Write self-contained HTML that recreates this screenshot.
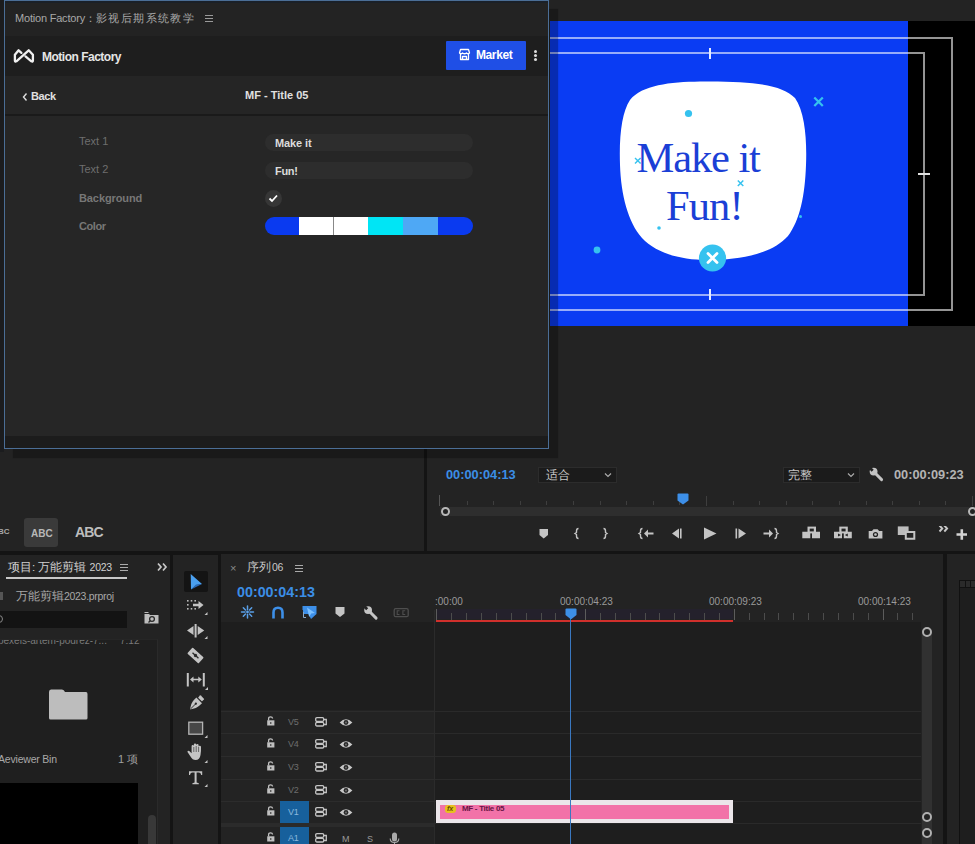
<!DOCTYPE html>
<html><head><meta charset="utf-8">
<style>
*{margin:0;padding:0;box-sizing:border-box}
html,body{width:975px;height:844px;overflow:hidden;background:#141414;font-family:"Liberation Sans",sans-serif;color:#9a9a9a}
.a{position:absolute}
.t{position:absolute;white-space:nowrap;line-height:1}
</style></head><body>

<!-- ===== upper-left panel (under floating) ===== -->
<div class="a" style="left:0;top:0;width:424px;height:551px;background:#232323"></div>
<!-- ===== program monitor panel ===== -->
<div class="a" style="left:427px;top:0;width:548px;height:551px;background:#232323"></div>
<!-- preview -->
<div class="a" style="left:550px;top:21px;width:358px;height:305px;background:#0a3cf3"></div>
<div class="a" style="left:908px;top:21px;width:67px;height:305px;background:#000"></div>


<!-- preview guides -->
<div class="a" style="left:550px;top:37px;width:403px;height:274px;border:2px solid rgba(255,255,255,.58);border-left:none"></div>
<div class="a" style="left:550px;top:52px;width:375px;height:244px;border:2px solid rgba(255,255,255,.58);border-left:none"></div>
<div class="a" style="left:708.5px;top:47.5px;width:2px;height:11.5px;background:#e6ecff"></div>
<div class="a" style="left:708.5px;top:288.5px;width:2px;height:11.5px;background:#e6ecff"></div>
<div class="a" style="left:918px;top:173.3px;width:11.5px;height:2px;background:#e0e0e0"></div>
<!-- blob -->
<svg class="a" style="left:590px;top:70px" width="240" height="210" viewBox="-10 0 240 210">
 <path d="M100 11.5 C150 11 182 14 195 28 C205 42 207 70 206 95 C205 125 200 150 188 166 C172 184 140 190 108 190 C78 190 55 182 42 168 C28 152 21 125 20 95 C19 65 22 42 30 30 C42 15 70 12 100 11.5 Z" fill="#fff"/>
 <circle cx="88.5" cy="43.5" r="3.6" fill="#35c2ef"/>
 <circle cx="59" cy="158" r="1.8" fill="#35c2ef"/>
 <circle cx="-3" cy="180" r="3.4" fill="#35c2ef"/>
 <circle cx="200.5" cy="146.5" r="1.5" fill="#35c2ef"/>
 <path d="M214.3 27.5 L222.8 36 M222.8 27.5 L214.3 36" stroke="#35c2ef" stroke-width="2.3"/>
 <path d="M137.8 110.5 L143.3 116 M143.3 110.5 L137.8 116" stroke="#35c2ef" stroke-width="1.5"/>
 <path d="M35 88 L40.6 93.6 M40.6 88 L35 93.6" stroke="#35c2ef" stroke-width="1.4"/>
 <circle cx="112.5" cy="188" r="13.6" fill="#35c2ef"/>
 <path d="M108 183.5 L117 192.5 M117 183.5 L108 192.5" stroke="#fff" stroke-width="2.8" stroke-linecap="round"/>
</svg>
<div class="t" style="left:636.5px;top:136.5px;font-family:'Liberation Serif',serif;font-size:42.5px;letter-spacing:-1.1px;color:#1b3fd6;line-height:1">Make it</div>
<div class="t" style="left:666px;top:185px;font-family:'Liberation Serif',serif;font-size:42.5px;letter-spacing:-0.9px;color:#1b3fd6;line-height:1">Fun!</div>
<!-- ===== bottom panels ===== -->
<div class="a" style="left:0;top:555px;width:170px;height:289px;background:#232323"></div>
<div class="a" style="left:173px;top:555px;width:45px;height:289px;background:#232323"></div>
<div class="a" style="left:221px;top:554px;width:722px;height:290px;background:#232323"></div>
<div class="a" style="left:947px;top:554px;width:28px;height:290px;background:#232323"></div>


<!-- ===== monitor controls ===== -->
<div class="t" style="left:446px;top:469px;font-size:12.8px;font-weight:bold;color:#3b8ee6">00:00:04:13</div>
<div class="a" style="left:538px;top:467px;width:79px;height:16px;background:#1b1b1b;border:1px solid #2c2c2c"></div>
<div class="t" style="left:546px;top:469px;font-size:12px;color:#c8c8c8">适合</div>
<svg class="a" style="left:604px;top:472px" width="8" height="6" viewBox="0 0 8 6"><path d="M1 1.5 L4 4.5 L7 1.5" fill="none" stroke="#aaa" stroke-width="1.2"/></svg>
<div class="a" style="left:783px;top:467px;width:77px;height:16px;background:#1b1b1b;border:1px solid #2c2c2c"></div>
<div class="t" style="left:788px;top:469px;font-size:12px;color:#c8c8c8">完整</div>
<svg class="a" style="left:847px;top:472px" width="8" height="6" viewBox="0 0 8 6"><path d="M1 1.5 L4 4.5 L7 1.5" fill="none" stroke="#aaa" stroke-width="1.2"/></svg>
<svg class="a" style="left:869px;top:467px" width="15" height="15" viewBox="0 0 15 15"><circle cx="4.6" cy="4.6" r="3.9" fill="#c4c4c4"/><rect x="-1.4" y="-6.5" width="2.8" height="5.2" fill="#232323" transform="translate(4.6 4.6) rotate(-45)"/><path d="M5 5 L12.6 12.6" stroke="#c4c4c4" stroke-width="2.9" stroke-linecap="round"/></svg>
<div class="t" style="left:894px;top:469px;font-size:12.8px;font-weight:bold;color:#b4b4b4">00:00:09:23</div>
<!-- scrub ruler -->
<div class="a" style="left:439px;top:495px;width:1px;height:11px;background:#555"></div>
<div class="a" style="left:467px;top:501px;width:1px;height:4px;background:#3e3e3e"></div><div class="a" style="left:493px;top:501px;width:1px;height:4px;background:#3e3e3e"></div><div class="a" style="left:520px;top:501px;width:1px;height:4px;background:#3e3e3e"></div><div class="a" style="left:546px;top:501px;width:1px;height:4px;background:#3e3e3e"></div><div class="a" style="left:573px;top:501px;width:1px;height:4px;background:#3e3e3e"></div><div class="a" style="left:600px;top:501px;width:1px;height:4px;background:#3e3e3e"></div><div class="a" style="left:626px;top:501px;width:1px;height:4px;background:#3e3e3e"></div><div class="a" style="left:653px;top:501px;width:1px;height:4px;background:#3e3e3e"></div><div class="a" style="left:679px;top:501px;width:1px;height:4px;background:#3e3e3e"></div><div class="a" style="left:706px;top:496px;width:1px;height:10px;background:#3e3e3e"></div><div class="a" style="left:733px;top:501px;width:1px;height:4px;background:#3e3e3e"></div><div class="a" style="left:759px;top:501px;width:1px;height:4px;background:#3e3e3e"></div><div class="a" style="left:786px;top:501px;width:1px;height:4px;background:#3e3e3e"></div><div class="a" style="left:812px;top:501px;width:1px;height:4px;background:#3e3e3e"></div><div class="a" style="left:839px;top:501px;width:1px;height:4px;background:#3e3e3e"></div><div class="a" style="left:866px;top:501px;width:1px;height:4px;background:#3e3e3e"></div><div class="a" style="left:892px;top:501px;width:1px;height:4px;background:#3e3e3e"></div><div class="a" style="left:919px;top:501px;width:1px;height:4px;background:#3e3e3e"></div><div class="a" style="left:945px;top:501px;width:1px;height:4px;background:#3e3e3e"></div><div class="a" style="left:972px;top:496px;width:1px;height:10px;background:#3e3e3e"></div>
<div class="a" style="left:440px;top:507px;width:535px;height:9px;background:#2e2e2e"></div>
<div class="a" style="left:441px;top:507px;width:9px;height:9px;border:2px solid #b8b8b8;border-radius:50%;background:#232323"></div>
<div class="a" style="left:968px;top:507px;width:9px;height:9px;border:2px solid #b8b8b8;border-radius:50%;background:#232323"></div>
<svg class="a" style="left:677px;top:493px" width="12" height="12" viewBox="0 0 12 12"><path d="M0.5 1.5 Q0.5 0.5 1.5 0.5 H10.5 Q11.5 0.5 11.5 1.5 V7.5 L6 11.5 L0.5 7.5 Z" fill="#3d8fe8"/></svg>
<!-- transport -->
<svg class="a" style="left:536px;top:526px" width="440" height="16" viewBox="536 526 440 16" fill="#c4c4c4" stroke="#c4c4c4">
 <path d="M539.5 529 H548 V535 L543.7 538.5 L539.5 535 Z" stroke="none"/>
 <path d="M578.5 528.5 Q576.5 528.5 576.5 531 V532.5 L575 533.5 L576.5 534.5 V536 Q576.5 538.5 578.5 538.5" fill="none" stroke-width="1.4"/>
 <path d="M603.5 528.5 Q605.5 528.5 605.5 531 V532.5 L607 533.5 L605.5 534.5 V536 Q605.5 538.5 603.5 538.5" fill="none" stroke-width="1.4"/>
 <path d="M642.5 528.5 Q640.5 528.5 640.5 531 V532.5 L639 533.5 L640.5 534.5 V536 Q640.5 538.5 642.5 538.5" fill="none" stroke-width="1.4"/>
 <path d="M644 533.5 L648 529.5 V532.5 H653.5 V534.5 H648 V537.5 Z" stroke="none"/>
 <path d="M680 528.5 V538.5 H681.6 V528.5 Z M679 528.5 L672 533.5 L679 538.5 Z" stroke="none"/>
 <path d="M704 527.5 L716.5 533.5 L704 539.5 Z" stroke="none"/>
 <path d="M735.5 528.5 V538.5 H737.1 V528.5 Z M738.5 528.5 L746 533.5 L738.5 538.5 Z" stroke="none"/>
<g transform="translate(2.5 0)"> <path d="M772 528.5 Q774 528.5 774 531 V532.5 L775.5 533.5 L774 534.5 V536 Q774 538.5 772 538.5" fill="none" stroke-width="1.4"/>
 <path d="M770.5 533.5 L766.5 529.5 V532.5 H761 V534.5 H766.5 V537.5 Z" stroke="none"/></g>
 <path d="M802.3 531.8 H810.3 V538.2 H802.3 Z M812 531.8 H820 V538.2 H812 Z" stroke="none"/>
 <path d="M807.5 526.6 H816 V533.4 H807.5 Z"stroke="none"/>
 <path d="M809.7 528.6 H813.8 V531.4 H809.7 Z" fill="#232323" stroke="none"/>
 <path d="M834 531.8 H842 V538.2 H834 Z M843.8 531.8 H851.8 V538.2 H843.8 Z" stroke="none"/>
 <path d="M839.3 526.6 H847.8 V533.4 H839.3 Z" stroke="none"/>
 <path d="M841.5 528.6 H845.6 V531.4 H841.5 Z" fill="#232323" stroke="none"/>
 <path d="M838 533.5 L841 535 L838 536.5 Z M847.8 533.5 L844.8 535 L847.8 536.5 Z" fill="#232323" stroke="none"/>
 <path d="M868.7 531 H872 L873.5 529.2 H877.6 L879.1 531 H882.4 V538.4 H868.7 Z" stroke="none"/>
 <circle cx="875.5" cy="534.5" r="2.6" fill="#232323" stroke="none"/>
 <circle cx="875.5" cy="534.5" r="1.3" stroke="none"/>
 <path d="M897.8 526.4 H908.6 V535 H897.8 Z" stroke="none" fill="#bdbdbd"/>
 <path d="M905.8 531.9 H914.3 V538.8 H905.8 Z" fill="#232323" stroke-width="2" stroke="#c4c4c4"/>
 <path d="M939.5 525.5 L942.3 528.5 L939.5 531.5 M944.3 525.5 L947.1 528.5 L944.3 531.5" fill="none" stroke-width="1.9" stroke="#c8c8c8"/>
 <path d="M961.8 529.2 V539.8 M956.5 534.5 H967" fill="none" stroke-width="2.6" stroke="#d4d4d4"/>
</svg>
<!-- ABC panel -->
<div class="t" style="left:-2px;top:528px;font-size:8px;font-weight:bold;color:#a8a8a8">BC</div>
<div class="a" style="left:24px;top:518px;width:34px;height:29px;background:#3a3a3a;border-radius:3px"></div>
<div class="t" style="left:31px;top:529px;font-size:10px;font-weight:bold;color:#b8b8b8">ABC</div>
<div class="t" style="left:75px;top:525px;font-size:14px;font-weight:bold;letter-spacing:-0.9px;color:#bdbdbd">ABC</div>

<!-- ===== project panel ===== -->
<div class="t" style="left:8px;top:562px;font-size:11.5px;color:#d0d0d0">项目: 万能剪辑 <span style="font-size:10.5px;letter-spacing:-0.3px">2023</span></div>
<div class="a" style="left:119.5px;top:564px;width:8px;height:1px;background:#aaa;box-shadow:0 3px 0 #aaa,0 6px 0 #aaa"></div>
<div class="a" style="left:6px;top:577px;width:121px;height:2px;background:#c8c8c8"></div>
<svg class="a" style="left:157px;top:562px" width="11" height="10" viewBox="0 0 11 10"><path d="M1 1.5 L4 5 L1 8.5 M6 1.5 L9 5 L6 8.5" fill="none" stroke="#c8c8c8" stroke-width="1.7"/></svg>
<div class="a" style="left:0;top:592px;width:3px;height:8px;background:#555"></div>
<div class="t" style="left:16px;top:591px;font-size:11.5px;color:#a8a8a8">万能剪辑<span style="font-size:10.5px;letter-spacing:-0.3px">2023.prproj</span></div>
<div class="a" style="left:0;top:611px;width:127px;height:17px;background:#131313"></div>
<div class="a" style="left:-5px;top:615px;width:8px;height:8px;border:1.5px solid #888;border-radius:50%"></div>
<svg class="a" style="left:144px;top:612px" width="15" height="12" viewBox="0 0 15 12"><path d="M0.5 2 H5 L6 3 H14.5 V11.5 H0.5 Z" fill="#bdbdbd"/><path d="M0.5 0.5 H4.5" stroke="#bdbdbd"/><circle cx="8" cy="7" r="2.4" fill="none" stroke="#2a2a2a" stroke-width="1.3"/><path d="M6.3 8.7 L4.5 10.5" stroke="#2a2a2a" stroke-width="1.3"/></svg>
<div class="a" style="left:0;top:639px;width:158px;height:205px;background:#1f1f1f;border-right:1px solid #2a2a2a;border-top:1px solid #262626;overflow:hidden"><div class="t" style="left:-2px;top:-4px;font-size:10px;color:#7a7a7a">pexels-artem-podrez-7...</div><div class="t" style="left:120px;top:-4px;font-size:10px;color:#7a7a7a">7:12</div></div>
<svg class="a" style="left:48px;top:689px" width="40" height="31" viewBox="0 0 40 31"><path d="M1 3 Q1 0.5 3 0.5 H14 Q16 0.5 17 3 H38 Q39.5 3 39.5 5 V29 Q39.5 30.5 38 30.5 H2.5 Q1 30.5 1 29 Z" fill="#bdbdbd"/></svg>
<div class="t" style="left:-2px;top:754px;font-size:10.5px;letter-spacing:-0.2px;color:#a8a8a8">Aeviewer Bin</div>
<div class="t" style="left:118px;top:754px;font-size:11px;color:#a0a0a0">1 项</div>
<div class="a" style="left:0;top:783px;width:138px;height:61px;background:#000"></div>
<div class="a" style="left:148px;top:815px;width:8px;height:40px;background:#383838;border-radius:4px"></div>

<!-- ===== tools ===== -->
<div class="a" style="left:184px;top:571px;width:24px;height:21px;background:#141414;border-radius:2px"></div>
<svg class="a" style="left:173px;top:560px" width="45" height="230" viewBox="173 560 45 230" fill="#c4c4c4">
 <path d="M190.7 574 L202 584 L196.5 585 L191 589.5 Z" fill="#4aa0f0"/>
 <path d="M196 584.5 L202 584 L191 589.5 Z" fill="#2a6ab8"/>
 <g fill="#bbb"><rect x="187" y="600" width="1.6" height="1.6"/><rect x="190.7" y="600" width="1.6" height="1.6"/><rect x="194.4" y="600" width="1.6" height="1.6"/><rect x="187" y="604" width="1.6" height="1.6"/><rect x="187" y="608" width="1.6" height="1.6"/><rect x="190.7" y="608" width="1.6" height="1.6"/><rect x="194.4" y="608" width="1.6" height="1.6"/></g>
 <path d="M193 603.8 H198.5 V601 L203.5 605 L198.5 609 V606.2 H193 Z"/>
 <path d="M204.5 615 L207.5 615 L207.5 612 Z"/>
 <path d="M194.6 624 H196.6 V637.5 H194.6 Z"/>
 <path d="M187 630.5 L193.5 626 V635 Z M204.2 630.5 L197.7 626 V635 Z"/>
 <path d="M204.5 639 L207.5 639 L207.5 636 Z"/>
 <g transform="translate(195.5 655.5) rotate(42)"><rect x="-7.5" y="-4" width="15" height="8" rx="0.8"/><path d="M-4 -0.7 H-1.5 L-0.7 -1.6 L0.7 -1.6 L1.5 -0.7 H4 V0.7 H1.5 L0.7 1.6 L-0.7 1.6 L-1.5 0.7 H-4 Z" fill="#2a2a2a"/></g>
 <path d="M186.8 673 H188.8 V686.5 H186.8 Z M202.8 673 H204.8 V686.5 H202.8 Z"/>
 <path d="M190 679.5 L193.5 676.5 V678.7 H198.3 V676.5 L201.8 679.5 L198.3 682.5 V680.3 H193.5 V682.5 Z"/>
 <path d="M205 690 L208 690 L208 687 Z"/>
 <g transform="translate(196 703.5) rotate(45)"><rect x="-2.8" y="-9" width="5.6" height="3.4" rx="0.6"/><path d="M-4 -4.5 H4 V-1 Q4 3 0 8.5 Q-4 3 -4 -1 Z"/><path d="M0 0 V8" stroke="#2a2a2a" stroke-width="0.9"/><circle cx="0" cy="0.2" r="1.1" fill="#2a2a2a"/></g>
 <rect x="188.8" y="722.2" width="13.8" height="12" fill="#474747" stroke="#b4b4b4" stroke-width="1.3"/>
 <path d="M204.5 738 L207.5 738 L207.5 735 Z"/>
 <path d="M190.5 756.5 L187.5 752 Q187.3 750.8 188.5 750.8 Q189.5 750.8 190.8 752.5 L191.6 753.2 V746.3 Q191.6 745 192.7 745 Q193.8 745 193.8 746.3 V744.8 Q193.8 743.5 195 743.5 Q196.2 743.5 196.2 744.8 V745.3 Q196.2 744 197.4 744 Q198.6 744 198.6 745.3 V747 Q198.6 745.8 199.8 745.8 Q201 745.8 201 747 Q201.2 751 200.5 755 Q199.8 760 195.5 760 Q192.5 760 190.5 756.5 Z"/>
 <path d="M193.8 747 V752 M196.2 746 V752 M198.6 747 V752" stroke="#232323" stroke-width="0.6" fill="none"/>
 <path d="M204.5 763 L207.5 763 L207.5 760 Z"/>
 <path d="M189 771.2 H202.2 V775 H201.2 Q200.8 772.6 198.8 772.6 H196.6 V782.6 L198.8 783.2 V784.2 H192.4 V783.2 L194.6 782.6 V772.6 H192.4 Q190.4 772.6 190 775 H189 Z"/>
 <path d="M204.5 787 L207.5 787 L207.5 784 Z"/>
</svg>

<!-- ===== timeline ===== -->
<div class="t" style="left:230px;top:563px;font-size:11px;color:#8a8a8a">×</div>
<div class="t" style="left:247px;top:561px;font-size:12px;color:#c8c8c8">序列<span style="font-size:10.5px;margin-left:1px;letter-spacing:-0.3px">06</span></div>
<div class="a" style="left:295px;top:565px;width:8px;height:1px;background:#aaa;box-shadow:0 3px 0 #aaa,0 6px 0 #aaa"></div>
<div class="t" style="left:237px;top:585px;font-size:14.3px;font-weight:bold;color:#3b8ee6">00:00:04:13</div>
<svg class="a" style="left:236px;top:603px" width="180" height="18" viewBox="236 603 180 18">
<g stroke="#5aa0e8" stroke-width="1.5" stroke-linecap="round" fill="none"><path d="M247.5 606 V609.5 M247.5 614.5 V618 M241.5 612 H245 M250 612 H253.5 M243.3 607.8 L245.5 610 M249.5 614 L251.7 616.2 M251.7 607.8 L249.5 610 M245.5 614 L243.3 616.2"/></g><circle cx="247.5" cy="612" r="1.4" fill="#5aa0e8"/>
 <path d="M273.5 618.5 V612.5 Q273.5 607.8 278 607.8 Q282.5 607.8 282.5 612.5 V618.5" stroke="#3d8fe8" stroke-width="2.6" fill="none"/>
<path d="M302.5 606 H316.5 V614 L311 619 L308.5 614 H302.5 Z" fill="#3d8fe8"/><path d="M307 607.5 L315 613 L311.2 613.5 L309.2 617 Z" fill="#7cc0ff"/><path d="M302.5 610 V618.5 H306.5" stroke="#232323" stroke-width="1" fill="none"/><path d="M303.5 612 V617.5 H306" stroke="#8ac" stroke-width="1" fill="none"/>
 <path d="M335.5 607 H344.5 V613.5 L340 617 L335.5 613.5 Z" fill="#c4c4c4"/>
<g transform="translate(363.5 605.5)"><circle cx="4.6" cy="4.6" r="3.9" fill="#c4c4c4"/><rect x="-1.4" y="-6.5" width="2.8" height="5.2" fill="#232323" transform="translate(4.6 4.6) rotate(-45)"/><path d="M5 5 L12.6 12.6" stroke="#c4c4c4" stroke-width="2.9" stroke-linecap="round"/></g>
 <rect x="394.2" y="608.7" width="14" height="8" rx="1.5" fill="none" stroke="#4e4e4e" stroke-width="1.3"/>
 <path d="M399.5 610.8 H397.2 V614.5 H399.5 M405.2 610.8 H402.9 V614.5 H405.2" stroke="#4e4e4e" stroke-width="1.1" fill="none"/>
</svg>
<!-- header split -->
<div class="a" style="left:221px;top:622px;width:213px;height:88px;background:#1e1e1e"></div>
<div class="a" style="left:435px;top:622px;width:486px;height:222px;background:#1e1e1e"></div>
<div class="a" style="left:434px;top:610px;width:1px;height:234px;background:#2b2b2b"></div>
<!-- track header rows -->
<div class="a" style="left:221px;top:711px;width:213px;height:22px;background:#232323;border-top:1px solid #2c2c2c"></div><div class="a" style="left:435px;top:711px;width:486px;height:1px;background:#2a2a2a"></div><div class="t" style="left:288px;top:718px;font-size:9px;letter-spacing:-0.3px;color:#6e6e6e">V5</div><svg class="a" style="left:266px;top:716px" width="10" height="10" viewBox="0 0 10 10"><path d="M2.6 4.5 V2.8 Q2.6 0.8 4.6 0.8 Q6.4 0.8 6.6 2.5" fill="none" stroke="#c0c0c0" stroke-width="1.3"/><rect x="1.2" y="4.3" width="7.2" height="5.2" fill="#c0c0c0"/><rect x="4.3" y="6" width="1" height="2" fill="#333"/></svg><svg class="a" style="left:315px;top:717px" width="12" height="10" viewBox="0 0 12 10"><rect x="0.7" y="0.7" width="8" height="3.6" rx="1.2" fill="none" stroke="#c4c4c4" stroke-width="1.3"/><rect x="0.7" y="5.4" width="8" height="3.6" rx="1.2" fill="none" stroke="#c4c4c4" stroke-width="1.3"/><path d="M8.5 2.5 H11.3 V7.5 H8.5" fill="none" stroke="#c4c4c4" stroke-width="1.3"/></svg><svg class="a" style="left:339px;top:718px" width="14" height="9" viewBox="0 0 14 9"><path d="M0.6 4.5 Q7 -2.2 13.4 4.5 Q7 11.2 0.6 4.5 Z" fill="#c8c8c8"/><circle cx="7" cy="4.5" r="2.4" fill="#2a2a2a"/><circle cx="7" cy="4.5" r="0.9" fill="#777"/></svg><div class="a" style="left:221px;top:733px;width:213px;height:22px;background:#232323;border-top:1px solid #2c2c2c"></div><div class="a" style="left:435px;top:733px;width:486px;height:1px;background:#2a2a2a"></div><div class="t" style="left:288px;top:740px;font-size:9px;letter-spacing:-0.3px;color:#6e6e6e">V4</div><svg class="a" style="left:266px;top:738px" width="10" height="10" viewBox="0 0 10 10"><path d="M2.6 4.5 V2.8 Q2.6 0.8 4.6 0.8 Q6.4 0.8 6.6 2.5" fill="none" stroke="#c0c0c0" stroke-width="1.3"/><rect x="1.2" y="4.3" width="7.2" height="5.2" fill="#c0c0c0"/><rect x="4.3" y="6" width="1" height="2" fill="#333"/></svg><svg class="a" style="left:315px;top:739px" width="12" height="10" viewBox="0 0 12 10"><rect x="0.7" y="0.7" width="8" height="3.6" rx="1.2" fill="none" stroke="#c4c4c4" stroke-width="1.3"/><rect x="0.7" y="5.4" width="8" height="3.6" rx="1.2" fill="none" stroke="#c4c4c4" stroke-width="1.3"/><path d="M8.5 2.5 H11.3 V7.5 H8.5" fill="none" stroke="#c4c4c4" stroke-width="1.3"/></svg><svg class="a" style="left:339px;top:740px" width="14" height="9" viewBox="0 0 14 9"><path d="M0.6 4.5 Q7 -2.2 13.4 4.5 Q7 11.2 0.6 4.5 Z" fill="#c8c8c8"/><circle cx="7" cy="4.5" r="2.4" fill="#2a2a2a"/><circle cx="7" cy="4.5" r="0.9" fill="#777"/></svg><div class="a" style="left:221px;top:756px;width:213px;height:22px;background:#232323;border-top:1px solid #2c2c2c"></div><div class="a" style="left:435px;top:756px;width:486px;height:1px;background:#2a2a2a"></div><div class="t" style="left:288px;top:763px;font-size:9px;letter-spacing:-0.3px;color:#6e6e6e">V3</div><svg class="a" style="left:266px;top:761px" width="10" height="10" viewBox="0 0 10 10"><path d="M2.6 4.5 V2.8 Q2.6 0.8 4.6 0.8 Q6.4 0.8 6.6 2.5" fill="none" stroke="#c0c0c0" stroke-width="1.3"/><rect x="1.2" y="4.3" width="7.2" height="5.2" fill="#c0c0c0"/><rect x="4.3" y="6" width="1" height="2" fill="#333"/></svg><svg class="a" style="left:315px;top:762px" width="12" height="10" viewBox="0 0 12 10"><rect x="0.7" y="0.7" width="8" height="3.6" rx="1.2" fill="none" stroke="#c4c4c4" stroke-width="1.3"/><rect x="0.7" y="5.4" width="8" height="3.6" rx="1.2" fill="none" stroke="#c4c4c4" stroke-width="1.3"/><path d="M8.5 2.5 H11.3 V7.5 H8.5" fill="none" stroke="#c4c4c4" stroke-width="1.3"/></svg><svg class="a" style="left:339px;top:763px" width="14" height="9" viewBox="0 0 14 9"><path d="M0.6 4.5 Q7 -2.2 13.4 4.5 Q7 11.2 0.6 4.5 Z" fill="#c8c8c8"/><circle cx="7" cy="4.5" r="2.4" fill="#2a2a2a"/><circle cx="7" cy="4.5" r="0.9" fill="#777"/></svg><div class="a" style="left:221px;top:779px;width:213px;height:22px;background:#232323;border-top:1px solid #2c2c2c"></div><div class="a" style="left:435px;top:779px;width:486px;height:1px;background:#2a2a2a"></div><div class="t" style="left:288px;top:786px;font-size:9px;letter-spacing:-0.3px;color:#6e6e6e">V2</div><svg class="a" style="left:266px;top:784px" width="10" height="10" viewBox="0 0 10 10"><path d="M2.6 4.5 V2.8 Q2.6 0.8 4.6 0.8 Q6.4 0.8 6.6 2.5" fill="none" stroke="#c0c0c0" stroke-width="1.3"/><rect x="1.2" y="4.3" width="7.2" height="5.2" fill="#c0c0c0"/><rect x="4.3" y="6" width="1" height="2" fill="#333"/></svg><svg class="a" style="left:315px;top:785px" width="12" height="10" viewBox="0 0 12 10"><rect x="0.7" y="0.7" width="8" height="3.6" rx="1.2" fill="none" stroke="#c4c4c4" stroke-width="1.3"/><rect x="0.7" y="5.4" width="8" height="3.6" rx="1.2" fill="none" stroke="#c4c4c4" stroke-width="1.3"/><path d="M8.5 2.5 H11.3 V7.5 H8.5" fill="none" stroke="#c4c4c4" stroke-width="1.3"/></svg><svg class="a" style="left:339px;top:786px" width="14" height="9" viewBox="0 0 14 9"><path d="M0.6 4.5 Q7 -2.2 13.4 4.5 Q7 11.2 0.6 4.5 Z" fill="#c8c8c8"/><circle cx="7" cy="4.5" r="2.4" fill="#2a2a2a"/><circle cx="7" cy="4.5" r="0.9" fill="#777"/></svg><div class="a" style="left:221px;top:801px;width:213px;height:22px;background:#232323;border-top:1px solid #2c2c2c"></div><div class="a" style="left:435px;top:801px;width:486px;height:1px;background:#2a2a2a"></div><div class="a" style="left:280px;top:801px;width:29px;height:22px;background:#17609c"></div><div class="t" style="left:288px;top:808px;font-size:9px;letter-spacing:-0.3px;color:#8ab8dc">V1</div><svg class="a" style="left:266px;top:806px" width="10" height="10" viewBox="0 0 10 10"><path d="M2.6 4.5 V2.8 Q2.6 0.8 4.6 0.8 Q6.4 0.8 6.6 2.5" fill="none" stroke="#c0c0c0" stroke-width="1.3"/><rect x="1.2" y="4.3" width="7.2" height="5.2" fill="#c0c0c0"/><rect x="4.3" y="6" width="1" height="2" fill="#333"/></svg><svg class="a" style="left:315px;top:807px" width="12" height="10" viewBox="0 0 12 10"><rect x="0.7" y="0.7" width="8" height="3.6" rx="1.2" fill="none" stroke="#c4c4c4" stroke-width="1.3"/><rect x="0.7" y="5.4" width="8" height="3.6" rx="1.2" fill="none" stroke="#c4c4c4" stroke-width="1.3"/><path d="M8.5 2.5 H11.3 V7.5 H8.5" fill="none" stroke="#c4c4c4" stroke-width="1.3"/></svg><svg class="a" style="left:339px;top:808px" width="14" height="9" viewBox="0 0 14 9"><path d="M0.6 4.5 Q7 -2.2 13.4 4.5 Q7 11.2 0.6 4.5 Z" fill="#c8c8c8"/><circle cx="7" cy="4.5" r="2.4" fill="#2a2a2a"/><circle cx="7" cy="4.5" r="0.9" fill="#777"/></svg><div class="a" style="left:221px;top:823px;width:213px;height:21px;background:#232323;border-top:4px solid #2b2b2b"></div><div class="a" style="left:435px;top:823px;width:486px;height:1px;background:#2a2a2a"></div><div class="a" style="left:280px;top:827px;width:29px;height:17px;background:#17609c"></div><div class="t" style="left:288px;top:834px;font-size:9px;letter-spacing:-0.3px;color:#8ab8dc">A1</div><svg class="a" style="left:266px;top:832px" width="10" height="10" viewBox="0 0 10 10"><path d="M2.6 4.5 V2.8 Q2.6 0.8 4.6 0.8 Q6.4 0.8 6.6 2.5" fill="none" stroke="#c0c0c0" stroke-width="1.3"/><rect x="1.2" y="4.3" width="7.2" height="5.2" fill="#c0c0c0"/><rect x="4.3" y="6" width="1" height="2" fill="#333"/></svg><svg class="a" style="left:315px;top:833px" width="12" height="10" viewBox="0 0 12 10"><rect x="0.7" y="0.7" width="8" height="3.6" rx="1.2" fill="none" stroke="#c4c4c4" stroke-width="1.3"/><rect x="0.7" y="5.4" width="8" height="3.6" rx="1.2" fill="none" stroke="#c4c4c4" stroke-width="1.3"/><path d="M8.5 2.5 H11.3 V7.5 H8.5" fill="none" stroke="#c4c4c4" stroke-width="1.3"/></svg><div class="t" style="left:342px;top:835px;font-size:9px;color:#9a9a9a">M</div><div class="t" style="left:367px;top:835px;font-size:9px;color:#9a9a9a">S</div><svg class="a" style="left:389px;top:832px" width="11" height="13" viewBox="0 0 11 13"><rect x="3" y="0.5" width="5" height="9" rx="2.5" fill="#aaa"/><path d="M1.2 6.5 Q1.2 10.5 5.5 10.5 Q9.8 10.5 9.8 6.5 M5.5 10.5 V13" fill="none" stroke="#aaa" stroke-width="1.1"/></svg>
<!-- ruler -->
<div class="t" style="left:435px;top:597px;font-size:10px;color:#9a9a9a">:00:00</div>
<div class="t" style="left:560px;top:597px;font-size:10px;color:#9a9a9a">00:00:04:23</div>
<div class="t" style="left:709px;top:597px;font-size:10px;color:#9a9a9a">00:00:09:23</div>
<div class="t" style="left:858px;top:597px;font-size:10px;color:#9a9a9a">00:00:14:23</div>

<div class="a" style="left:436px;top:609px;width:297px;height:10px;background:#24212c"></div><div class="a" style="left:436.4px;top:609px;width:1px;height:11px;background:#5c5c5c"></div><div class="a" style="left:451.3px;top:613px;width:1px;height:7px;background:#4c4c4c"></div><div class="a" style="left:466.1px;top:613px;width:1px;height:7px;background:#4c4c4c"></div><div class="a" style="left:481.0px;top:613px;width:1px;height:7px;background:#4c4c4c"></div><div class="a" style="left:495.9px;top:613px;width:1px;height:7px;background:#4c4c4c"></div><div class="a" style="left:510.8px;top:613px;width:1px;height:7px;background:#4c4c4c"></div><div class="a" style="left:525.6px;top:613px;width:1px;height:7px;background:#4c4c4c"></div><div class="a" style="left:540.5px;top:613px;width:1px;height:7px;background:#4c4c4c"></div><div class="a" style="left:555.4px;top:613px;width:1px;height:7px;background:#4c4c4c"></div><div class="a" style="left:570.2px;top:613px;width:1px;height:7px;background:#4c4c4c"></div><div class="a" style="left:585.1px;top:609px;width:1px;height:11px;background:#5c5c5c"></div><div class="a" style="left:600.0px;top:613px;width:1px;height:7px;background:#4c4c4c"></div><div class="a" style="left:614.8px;top:613px;width:1px;height:7px;background:#4c4c4c"></div><div class="a" style="left:629.7px;top:613px;width:1px;height:7px;background:#4c4c4c"></div><div class="a" style="left:644.6px;top:613px;width:1px;height:7px;background:#4c4c4c"></div><div class="a" style="left:659.4px;top:613px;width:1px;height:7px;background:#4c4c4c"></div><div class="a" style="left:674.3px;top:613px;width:1px;height:7px;background:#4c4c4c"></div><div class="a" style="left:689.2px;top:613px;width:1px;height:7px;background:#4c4c4c"></div><div class="a" style="left:704.1px;top:613px;width:1px;height:7px;background:#4c4c4c"></div><div class="a" style="left:718.9px;top:613px;width:1px;height:7px;background:#4c4c4c"></div><div class="a" style="left:733.8px;top:609px;width:1px;height:11px;background:#5c5c5c"></div><div class="a" style="left:748.7px;top:613px;width:1px;height:7px;background:#4c4c4c"></div><div class="a" style="left:763.5px;top:613px;width:1px;height:7px;background:#4c4c4c"></div><div class="a" style="left:778.4px;top:613px;width:1px;height:7px;background:#4c4c4c"></div><div class="a" style="left:793.3px;top:613px;width:1px;height:7px;background:#4c4c4c"></div><div class="a" style="left:808.1px;top:613px;width:1px;height:7px;background:#4c4c4c"></div><div class="a" style="left:823.0px;top:613px;width:1px;height:7px;background:#4c4c4c"></div><div class="a" style="left:837.9px;top:613px;width:1px;height:7px;background:#4c4c4c"></div><div class="a" style="left:852.8px;top:613px;width:1px;height:7px;background:#4c4c4c"></div><div class="a" style="left:867.6px;top:613px;width:1px;height:7px;background:#4c4c4c"></div><div class="a" style="left:882.5px;top:609px;width:1px;height:11px;background:#5c5c5c"></div><div class="a" style="left:897.4px;top:613px;width:1px;height:7px;background:#4c4c4c"></div><div class="a" style="left:912.2px;top:613px;width:1px;height:7px;background:#4c4c4c"></div><div class="a" style="left:436px;top:620px;width:297px;height:2px;background:#d0302c"></div>
<div class="a" style="left:570px;top:612px;width:1px;height:232px;background:#3a78c0"></div>
<svg class="a" style="left:565px;top:608px" width="12" height="12" viewBox="0 0 12 12"><path d="M0.5 1.5 Q0.5 0.5 1.5 0.5 H10.5 Q11.5 0.5 11.5 1.5 V7 L6.5 11 H5.5 L0.5 7 Z" fill="#3d8fe8"/></svg>
<!-- clip -->
<div class="a" style="left:436px;top:800px;width:297px;height:23px;background:#ebe6ea"></div>
<div class="a" style="left:440px;top:805px;width:289px;height:14px;background:#f272a8"></div>
<div class="a" style="left:445px;top:805px;width:11px;height:8px;background:#e6c21e;border-radius:3px"></div>
<div class="t" style="left:447px;top:805px;font-size:7px;font-weight:bold;font-style:italic;color:#6a4a00">fx</div>
<div class="t" style="left:462px;top:805px;font-size:8px;font-weight:bold;letter-spacing:-0.3px;color:#6a1445">MF - Title 05</div>
<div class="a" style="left:570px;top:800px;width:1px;height:23px;background:#3a78c0"></div>
<!-- scrollbar -->
<div class="a" style="left:922px;top:632px;width:10px;height:212px;background:#313131"></div>
<div class="a" style="left:922px;top:627px;width:10px;height:10px;border:2px solid #b0b0b0;border-radius:50%;background:#232323"></div>
<div class="a" style="left:922px;top:812px;width:10px;height:10px;border:2px solid #b0b0b0;border-radius:50%;background:#232323"></div>
<div class="a" style="left:922px;top:828px;width:10px;height:10px;border:2px solid #b0b0b0;border-radius:50%;background:#232323"></div>
<!-- right mini panel -->
<div class="a" style="left:959px;top:580px;width:16px;height:264px;background:#1e1e1e;border-left:1px solid #111;border-top:1px solid #111"></div><div class="a" style="left:960px;top:581px;width:15px;height:7px;background:#2a2a2a;border-bottom:1px solid #111"></div><div class="a" style="left:965px;top:581px;width:1px;height:7px;background:#111"></div><div class="a" style="left:970px;top:581px;width:1px;height:7px;background:#111"></div>
<!-- ===== floating panel ===== -->
<div class="a" style="left:0;top:0;width:4px;height:452px;background:#1b1c1e"></div>
<div class="a" style="left:4px;top:0;width:545px;height:449px;background:#262626;border:1px solid #4b6e96;box-shadow:9px 9px 1px rgba(0,0,0,.27)">
</div>
<div class="a" style="left:5px;top:1px;width:543px;height:35px;background:#232323;border-top:2px solid #1a2028"></div>
<div class="a" style="left:5px;top:36px;width:543px;height:40px;background:#1e1e1e"></div>
<div class="a" style="left:5px;top:76px;width:543px;height:38px;background:#252525"></div>
<div class="a" style="left:5px;top:114px;width:543px;height:2px;background:#1a1a1a"></div>
<div class="a" style="left:5px;top:436px;width:543px;height:12px;background:#1c1c1c"></div>


<!-- title bar text -->
<div class="t" style="left:15px;top:13px;font-size:11px;color:#a8a8a8"><span style="letter-spacing:-0.2px">Motion Factory</span>：<span style="letter-spacing:1.4px">影视后期系统教学</span></div>
<div class="a" style="left:205px;top:15px;width:8px;height:1px;background:#9a9a9a;box-shadow:0 3px 0 #9a9a9a,0 6px 0 #9a9a9a"></div>
<!-- logo -->
<svg class="a" style="left:13px;top:48px" width="22" height="16" viewBox="0 0 22 16"><path d="M8.4 4.9 L5.6 2.3 L1.9 6.8 V12.4 Q1.9 14 3.4 13.3 L15.7 2.3 L19.9 6.8 V12.4 Q19.9 14 18.4 13.3 L12.5 8.4" fill="none" stroke="#f0f0f0" stroke-width="2.3" stroke-linejoin="round" stroke-linecap="round"/></svg>
<div class="t" style="left:42px;top:51px;font-size:12px;font-weight:bold;letter-spacing:-0.5px;color:#e6e6e6">Motion Factory</div>
<!-- market button -->
<div class="a" style="left:446px;top:41px;width:80px;height:29px;background:#1f4fe6;border-radius:1px"></div>
<svg class="a" style="left:458px;top:48px" width="13" height="13" viewBox="0 0 13 13"><path d="M1.5 5 L2.5 1.5 H10.5 L11.5 5 Q10 6.5 8.5 5 Q6.5 6.5 4.5 5 Q3 6.5 1.5 5 Z M2.5 6 V11.5 H10.5 V6 M4.5 11.5 V8.5 H8.5 V11.5" fill="none" stroke="#fff" stroke-width="1.3" stroke-linejoin="round"/></svg>
<div class="t" style="left:476px;top:49px;font-size:12px;font-weight:bold;letter-spacing:-0.4px;color:#fff">Market</div>
<div class="a" style="left:534px;top:50px;width:3px;height:3px;background:#ddd;border-radius:50%;box-shadow:0 4px 0 #ddd,0 8px 0 #ddd"></div>
<!-- nav -->
<svg class="a" style="left:22px;top:92px" width="6" height="10" viewBox="0 0 6 10"><path d="M4.5 1.5 L1.5 5 L4.5 8.5" fill="none" stroke="#ddd" stroke-width="1.4"/></svg>
<div class="t" style="left:31px;top:91px;font-size:11px;font-weight:bold;letter-spacing:-0.4px;color:#e0e0e0">Back</div>
<div class="t" style="left:245px;top:90px;font-size:11px;font-weight:bold;color:#e0e0e0">MF - Title 05</div>
<!-- form -->
<div class="t" style="left:79px;top:136px;font-size:11px;color:#6e6e6e">Text 1</div>
<div class="t" style="left:79px;top:164px;font-size:11px;color:#6e6e6e">Text 2</div>
<div class="t" style="left:79px;top:193px;font-size:11px;font-weight:bold;letter-spacing:-0.1px;color:#777">Background</div>
<div class="t" style="left:79px;top:221px;font-size:11px;font-weight:bold;letter-spacing:-0.4px;color:#777">Color</div>
<div class="a" style="left:265px;top:134px;width:208px;height:17px;background:#2d2d2d;border-radius:9px"></div>
<div class="t" style="left:275px;top:138px;font-size:11px;font-weight:bold;letter-spacing:-0.1px;color:#dcdcdc">Make it</div>
<div class="a" style="left:265px;top:162px;width:208px;height:17px;background:#2d2d2d;border-radius:9px"></div>
<div class="t" style="left:275px;top:166px;font-size:11px;font-weight:bold;letter-spacing:-0.3px;color:#dcdcdc">Fun!</div>
<div class="a" style="left:265px;top:190px;width:17px;height:17px;background:#363636;border-radius:50%"></div>
<svg class="a" style="left:268px;top:194px" width="11" height="9" viewBox="0 0 11 9"><path d="M1.5 4.5 L4 7 L9 1.5" fill="none" stroke="#fff" stroke-width="1.8"/></svg>
<div class="a" style="left:265px;top:217px;width:208px;height:18px;border-radius:9px;overflow:hidden;background:#0a3af0">
 <div class="a" style="left:34px;top:0;width:34px;height:18px;background:#fff"></div>
 <div class="a" style="left:68px;top:0;width:1px;height:18px;background:#888"></div>
 <div class="a" style="left:69px;top:0;width:34px;height:18px;background:#fff"></div>
 <div class="a" style="left:103px;top:0;width:35px;height:18px;background:#00e5f5"></div>
 <div class="a" style="left:138px;top:0;width:35px;height:18px;background:#4ea8f5"></div>
</div>
</body></html>
